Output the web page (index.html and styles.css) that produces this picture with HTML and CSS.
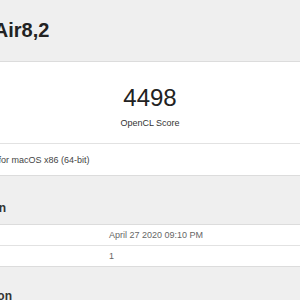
FILE: index.html
```html
<!DOCTYPE html>
<html lang="en">
<head>
<meta charset="utf-8">
<title>MacBook Air8,2 - Geekbench Browser</title>
<link rel="stylesheet" href="styles.css">
</head>
<body>
<div class="page">
  <header class="page-header">
    <h1 class="device-name">MacBook Air8,2</h1>
  </header>

  <div class="card score-card">
    <div class="score-body">
      <div class="score-value">4498</div>
      <div class="score-label">OpenCL Score</div>
    </div>
    <div class="score-footer">Geekbench 5.1.0 Tryout for macOS x86 (64-bit)</div>
  </div>

  <section class="section section-result">
    <h2 class="section-title">Result Information</h2>
    <div class="card info-table">
      <div class="info-row">
        <div class="info-label">Upload Date</div>
        <div class="info-value">April 27 2020 09:10 PM</div>
      </div>
      <div class="info-row">
        <div class="info-label">Views</div>
        <div class="info-value">1</div>
      </div>
    </div>
  </section>

  <section class="section section-system">
    <h2 class="section-title">System Information</h2>
  </section>
</div>
</body>
</html>
```

FILE: styles.css
```css
html, body {
  margin: 0;
  padding: 0;
  background: #efefef;
  overflow: hidden;
}

body {
  font-family: "Liberation Sans", Arial, Helvetica, sans-serif;
  color: #333;
}

.page {
  width: 530px;
  margin-left: -115px;
}

.page-header {
  box-sizing: border-box;
  height: 61px;
  padding: 18px 15px 0;
}

.device-name {
  margin: 0;
  font-size: 20px;
  line-height: 24px;
  font-weight: bold;
  color: #222;
}

.card {
  background: #fff;
  border-top: 1px solid #dcdcdc;
  border-bottom: 1px solid #dcdcdc;
}

.score-body {
  box-sizing: border-box;
  height: 81px;
  padding-top: 22px;
  display: flex;
  flex-direction: column;
  align-items: center;
}

.score-value {
  font-size: 24px;
  line-height: 28px;
  color: #222;
}

.score-label {
  margin-top: 5px;
  font-size: 9px;
  line-height: 12px;
  color: #333;
}

.score-footer {
  box-sizing: border-box;
  height: 32px;
  padding: 0 15px;
  border-top: 1px solid #e2e2e2;
  display: flex;
  align-items: center;
  font-size: 9px;
  color: #444;
}

.section-result {
  padding-top: 24px;
}

.section-system {
  padding-top: 21px;
}

.section-title {
  margin: 0 0 8px;
  padding: 0 15px;
  font-size: 12px;
  line-height: 16px;
  font-weight: bold;
  color: #333;
}

.info-row {
  display: grid;
  grid-template-columns: 209px 1fr;
  align-items: center;
  height: 20px;
  padding: 0 15px;
  font-size: 9px;
  color: #666;
}

.info-row + .info-row {
  border-top: 1px solid #e2e2e2;
}
```
